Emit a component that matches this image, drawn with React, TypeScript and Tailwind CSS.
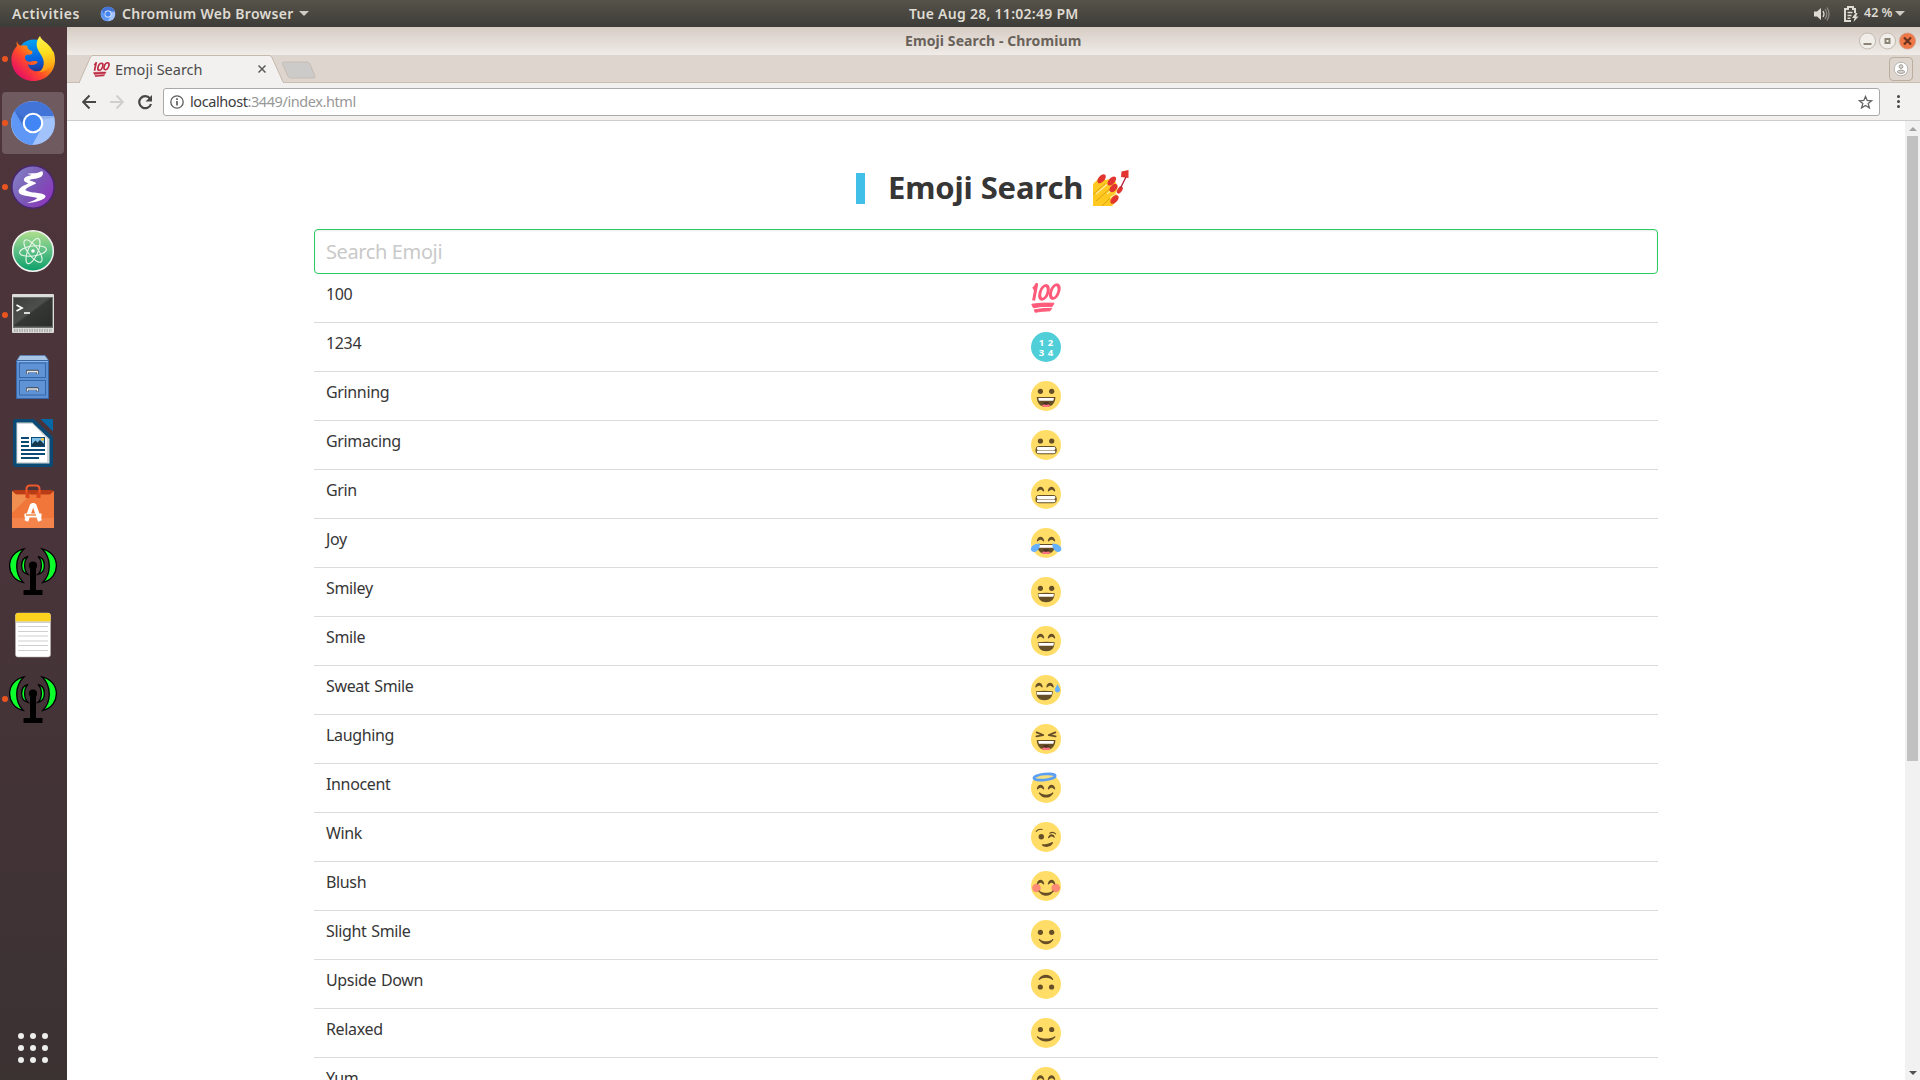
import React from "react";

const INK = "#664e27";

function Eyes({ y = 10.3 }: { y?: number }) {
  return (
    <g fill={INK}>
      <circle cx="9.4" cy={y} r="2.6" />
      <circle cx="20.7" cy={y} r="2.6" />
    </g>
  );
}

function HappyEyes({ y = 11, dx = 0 }: { y?: number; dx?: number }) {
  return (
    <g fill={INK} transform={`translate(${dx} ${y})`}>
      <path d="M5.800 .8C6.800-4.600 12.400-4.600 13.200.8 13.300 1.600 12.600 1.700 12.200 1.300 10.500-.8 8.500-.8 6.800 1.300 6.400 1.700 5.700 1.500 5.800.8z" />
      <path d="M16.800 .8C17.800-4.600 23.400-4.600 24.200.8 24.300 1.600 23.600 1.700 23.200 1.300 21.500-.8 19.500-.8 17.800 1.300 17.400 1.700 16.700 1.500 16.800.8z" />
    </g>
  );
}

function Laugh({ tongue = false, dx = 0 }: { tongue?: boolean; dx?: number }) {
  return (
    <g transform={`translate(${dx} 0)`}>
      <path d={tongue ? "M5.8 16h18.6c0 6-3.6 10-9.3 10s-9.3-4-9.3-10z" : "M6.8 16.200Q15.200 15.200 23.600 16.200c0 5.8-3.2 9-8.4 9s-8.400-3.200-8.400-9z"} fill={INK} />
      <path d="M7.400 17h15.400c0 1.600-.3 2.800-.8 2.800H8.200c-.5 0-.8-1.200-.8-2.800z" fill="#fff" />
      {tongue && (
        <>
          <path d="M12 22.200c0-1.600 6.200-1.600 6.200 0v1.800H12z" fill="#4c3526" />
          <path d="M10.600 24.900c1.600-2 3.400-1.600 4.500-1 1.100-.6 2.900-1 4.500 1-2.400 1.500-6.600 1.500-9 0z" fill="#ff717f" />
        </>
      )}
    </g>
  );
}

function Grit() {
  return (
    <g>
      <rect x="4.500" y="16" width="21.200" height="8.200" rx="3.800" fill={INK} />
      <rect x="5.800" y="17" width="18.600" height="2.900" rx="1.300" fill="#fff" />
      <rect x="5.800" y="20.400" width="18.600" height="2.800" rx="1.300" fill="#fff" />
    </g>
  );
}

function Smile({ y = 19, w = 7.2 }: { y?: number; w?: number }) {
  return (
    <path
      d={`M${15.1 - w} ${y}c-.4-.8.3-1.200 1-.8C${15.1 - w / 2} ${y + 2} ${15.1 + w / 2} ${y + 2} ${14.1 + w} ${y - 0.8}c.7-.4 1.400 0 1 .8C${15.1 + w / 2} ${y + 5.6} ${15.1 - w / 2} ${y + 5.6} ${15.1 - w} ${y}z`}
      fill={INK}
    />
  );
}

function Hundred({ width, height, color }: { width: number; height: number; color: string }) {
  return (
    <svg width={width} height={height} viewBox="0 0 30 30" preserveAspectRatio="none" className="block shrink-0" fill="none" stroke={color} strokeLinejoin="round">
      <path d="M2 5.800Q4.500 4.500 5.600 1.500L2.600 17.500" strokeWidth="3" />
      <ellipse cx="0" cy="0" rx="3.900" ry="6.900" transform="matrix(1 0 -.26 1 13 9.400)" strokeWidth="3" />
      <ellipse cx="0" cy="0" rx="3.900" ry="6.900" transform="matrix(1 0 -.26 1 23.800 8.600)" strokeWidth="3" />
      <path d="M.8 21.200Q12 19.600 23 20.200L21.200 23.400Q10 22.800 2.400 24.800z" fill={color} strokeWidth="1" />
      <path d="M3.400 26.800Q12 25.200 20.800 25.300L19 27.800Q10 28 4.200 29.300z" fill={color} strokeWidth="1" />
    </svg>
  );
}

function Emoji({ kind }: { kind: string }) {
  if (kind === "100") return <Hundred width={30} height={30} color="#ff5a79" />;
  if (kind === "1234") {
    return (
      <div className="grid h-[30px] w-[30px] grid-cols-[8px_8px] grid-rows-[9px_9px] content-center justify-center gap-x-px gap-y-px rounded-full bg-[#50cfd8] text-center text-[9.500px] leading-[9px] font-bold text-white">
        <span>1</span>
        <span>2</span>
        <span>3</span>
        <span>4</span>
      </div>
    );
  }
  return (
    <svg width="30" height="30" viewBox="0 0 30 30" className="block overflow-visible">
      <circle cx="15" cy="15" r="15" fill="#ffdd67" />
      {kind === "grinning" && <><Eyes /><Laugh tongue /></>}
      {kind === "grimacing" && <><Eyes y={11} /><Grit /></>}
      {kind === "grin" && <><HappyEyes /><Grit /></>}
      {kind === "joy" && (
        <>
          <HappyEyes y={12} />
          <Laugh tongue />
          <path d="M9 15.500C3 15.500-1.500 19 .2 22.600c1.700 3 8.600 1.500 8.800-7.100z" fill="#65b1ff" />
          <path d="M21.200 15.500c6 0 10.500 3.500 8.800 7.100-1.700 3-8.600 1.500-8.800-7.100z" fill="#65b1ff" />
        </>
      )}
      {kind === "smiley" && <><Eyes y={11.3} /><Laugh /></>}
      {kind === "smile" && <><HappyEyes /><Laugh /></>}
      {kind === "sweat" && (
        <>
          <HappyEyes y={11} dx={-1.5} />
          <Laugh dx={-1.8} />
          <path d="M26.500 9c.3 1.500 2.600 3.800 2.600 5.800 0 3.500-5.200 3.500-5.200 0 0-2 2.300-4.300 2.600-5.800z" fill="#65b1ff" />
        </>
      )}
      {kind === "laughing" && (
        <>
          <path d="M5.600 8.400L12.200 11.100 5.400 12.400M24.400 8.400L17.800 11.100 24.600 12.400" fill="none" stroke={INK} strokeWidth="1.800" strokeLinejoin="round" strokeLinecap="round" />
          <Laugh tongue />
        </>
      )}
      {kind === "innocent" && (
        <>
          <HappyEyes y={15} />
          <Smile y={20.4} />
          <ellipse cx="13.600" cy="4" rx="10.800" ry="2.900" transform="rotate(-6 13.600 4)" fill="#f5df7c" stroke="#5a9ff5" strokeWidth="2.500" />
        </>
      )}
      {kind === "wink" && (
        <>
          <circle cx="10.300" cy="14.800" r="2.700" fill={INK} />
          <path d="M17 15.600c1.200-4.600 6-4.400 6.800-.6 0 .8-.7.800-1.100.4-1.400-1.400-3-1.300-4.600.5-.5.500-1.200.4-1.100-.3z" fill={INK} />
          <path d="M5.200 9.300c1.300-1.600 4-2.200 6-1.800M18.800 11.200c2-1.200 4.300-.8 5.800.6" fill="none" stroke={INK} strokeWidth="1.100" strokeLinecap="round" />
          <path d="M11.500 22.300c3.800 0 6.700-.6 9.700-2.300 1-.3.900.6.600 1.300-1.600 4-8.200 4.700-10.800 1.900-.4-.6 0-.9.500-.9z" fill={INK} />
        </>
      )}
      {kind === "blush" && (
        <>
          <circle cx="5.500" cy="17" r="4.300" fill="#ff8a75" />
          <circle cx="24.700" cy="17" r="4.300" fill="#ff8a75" />
          <HappyEyes y={12} />
          <Smile y={20.5} w={7.5} />
        </>
      )}
      {kind === "slight" && <><Eyes y={12.3} /><Smile y={20} w={7.2} /></>}
      {kind === "upside" && <g transform="rotate(180 15 15)"><Eyes y={12} /><Smile y={20} w={7.2} /></g>}
      {kind === "relaxed" && <><Eyes y={11.5} /><Smile y={19.3} w={9.2} /></>}
      {kind === "yum" && <><HappyEyes y={11.5} /><Smile y={20} /></>}
    </svg>
  );
}

const rows: [string, string][] = [
  ["100", "100"],
  ["1234", "1234"],
  ["Grinning", "grinning"],
  ["Grimacing", "grimacing"],
  ["Grin", "grin"],
  ["Joy", "joy"],
  ["Smiley", "smiley"],
  ["Smile", "smile"],
  ["Sweat Smile", "sweat"],
  ["Laughing", "laughing"],
  ["Innocent", "innocent"],
  ["Wink", "wink"],
  ["Blush", "blush"],
  ["Slight Smile", "slight"],
  ["Upside Down", "upside"],
  ["Relaxed", "relaxed"],
  ["Yum", "yum"],
];

function Firefox() {
  return (
    <svg width="48" height="48" viewBox="0 0 48 48">
      <defs>
        <linearGradient id="ffBody" x1="0.9" y1="0.1" x2="0.15" y2="0.8">
          <stop offset="0" stopColor="#ffe226" />
          <stop offset=".35" stopColor="#ff9a0e" />
          <stop offset=".65" stopColor="#ff4a2b" />
          <stop offset="1" stopColor="#e9155f" />
        </linearGradient>
        <linearGradient id="ffGlobe" x1="0.4" y1="0" x2="0.5" y2="1">
          <stop offset="0" stopColor="#00a3f5" />
          <stop offset=".6" stopColor="#0560df" />
          <stop offset="1" stopColor="#2b2a7c" />
        </linearGradient>
        <linearGradient id="ffFlame" x1="0.4" y1="0" x2="0.5" y2="1">
          <stop offset="0" stopColor="#fff44f" />
          <stop offset=".45" stopColor="#ffdf1f" />
          <stop offset="1" stopColor="#ff9313" />
        </linearGradient>
      </defs>
      <circle cx="25" cy="22" r="17.500" fill="url(#ffGlobe)" />
      <path d="M8 6c-.6 2-.4 3.500 0 5-3.800 4-6 9-5.500 15C3.200 37.500 13 46 24.500 46 37 46 46 36.500 46 25c0-3-.6-6-1.600-8.500L39 14c-1 8 1 12-2.500 17.500-3 4.500-8.500 6-12.500 4-3-1.400-5-4-5-6.300 3 1.300 6 1.200 8.500-.6 1.200-.8 1.500-2 .2-2.400-3.500-.6-6 1.200-8.700.2-3-1-4-4.400-1.800-6.400 1.800-.6 3.800.6 6-1.200.4-1-.4-1.600.2-2.800-3.800-.7-5-2.500-5.200-5.200-3.200-1.300-5-.3-6.700-.3C9.500 10.500 8.400 8.300 8 6z" fill="url(#ffBody)" />
      <path d="M31 1c-3 3.500-4.200 8-2.600 12.500 1.600 4.300 5.600 7.500 6.300 13 .5 4.500-1.200 8-4.700 11 7-1 12.500-4.500 14.500-10.500 2-7-.8-13.500-6.500-18.500C35 5.700 32 4.500 31 1z" fill="url(#ffFlame)" />
    </svg>
  );
}

function Chromium({ size = 48 }: { size?: number }) {
  return (
    <svg width={size} height={size} viewBox="0 0 48 48" className="shrink-0">
      <circle cx="24" cy="24" r="22" fill="#a1c2fa" />
      <path d="M45 17H24L15.500 28.500 5.500 12C13-.5 38-3 45 17z" fill="#4274d8" />
      <path d="M5.500 12C-3 26 6 44 23.300 46L32 30 16 28z" fill="#5e97f6" />
      <path d="M5.500 12L15 29l1.500-9z" fill="#3567c4" opacity=".6" />
      <path d="M24 17h21l.4 1.600L31 21z" fill="#8fb2ee" />
      <circle cx="24" cy="24" r="10.300" fill="#fff" />
      <circle cx="24" cy="24" r="8.200" fill="#4285f4" />
    </svg>
  );
}

function Emacs() {
  return (
    <svg width="48" height="48" viewBox="0 0 48 48">
      <defs>
        <linearGradient id="em" x1="0" y1=".2" x2="1" y2=".9">
          <stop offset="0" stopColor="#8381c5" />
          <stop offset=".5" stopColor="#7a56b5" />
          <stop offset="1" stopColor="#9430bd" />
        </linearGradient>
      </defs>
      <circle cx="24" cy="24" r="21.200" fill="url(#em)" stroke="#4a2670" strokeWidth="1.600" />
      <path d="M18.400 10.700c3-.8 7-.3 9.500-.8 2.300-.5 4-1.800 5-1.600 1.600.6 1.500 4-1 5.600-3 1.900-9 1.800-11.500 3 2 1.500 6.500 1.800 6.800 3.600-2.800 1.300-9.500 3.700-11 6.500 4 3.500 18.500 2 20.300 6 .5 3.500-9 6.200-19.200 7.200 4-1.300 9.500-3.300 11-5.200-4.500-2-16.800-1.300-18.600-5.800-1-4.500 6-7 9.500-8.700-2-1.200-4.500-2-4.300-4.200.5-2.500 4.500-3.500 8-4.300-1.700-.4-3-.6-4.500-1.300z" fill="#fff" />
    </svg>
  );
}

function Atom() {
  return (
    <svg width="48" height="48" viewBox="0 0 48 48">
      <defs>
        <linearGradient id="at" x1=".5" y1="0" x2=".5" y2="1">
          <stop offset="0" stopColor="#b3df8d" />
          <stop offset=".5" stopColor="#5cc086" />
          <stop offset="1" stopColor="#0a9f68" />
        </linearGradient>
      </defs>
      <circle cx="24" cy="24" r="20.300" fill="url(#at)" stroke="#f3f3f3" strokeWidth="1.500" />
      <g fill="none" stroke="#e9f7ea" strokeWidth="1.100">
        <ellipse cx="24" cy="24" rx="13.500" ry="5" transform="rotate(-8 24 24)" />
        <ellipse cx="24" cy="24" rx="13.500" ry="5" transform="rotate(53 24 24)" />
        <ellipse cx="24" cy="24" rx="13.500" ry="5" transform="rotate(113 24 24)" />
      </g>
      <circle cx="24" cy="24" r="1.800" fill="#fff" />
    </svg>
  );
}

function Terminal() {
  return (
    <svg width="48" height="48" viewBox="0 0 48 48">
      <defs>
        <linearGradient id="tm" x1="0" y1="0" x2="1" y2="1">
          <stop offset="0" stopColor="#3d3f3d" />
          <stop offset=".45" stopColor="#4d4f4c" />
          <stop offset=".5" stopColor="#353735" />
          <stop offset="1" stopColor="#2b2d2b" />
        </linearGradient>
      </defs>
      <rect x="3" y="3" width="42" height="39" rx="1" fill="#dcdcda" />
      <rect x="4" y="6" width="40" height="31" fill="#6e706d" />
      <rect x="5" y="7" width="38" height="28.500" fill="url(#tm)" />
      <path d="M5 39.500h38" stroke="#b0b0ae" strokeWidth="3.500" strokeDasharray="1.500 1" />
      <path d="M7.500 14l5.500 3-5.500 3" fill="none" stroke="#fff" strokeWidth="1.700" />
      <path d="M15 22h6" stroke="#fff" strokeWidth="1.600" />
    </svg>
  );
}

function Files() {
  const drawer = (y: number) => (
    <g>
      <rect x="10.500" y={y} width="26" height="14.500" fill="#5f93d6" stroke="#3566a8" strokeWidth="1" />
      <path d={`M18.500 ${y + 11}v-3h10v3`} fill="none" stroke="#3d4650" strokeWidth="2.600" strokeLinejoin="round" />
      <path d={`M18.500 ${y + 10.8}v-2.300h10v2.300`} fill="none" stroke="#e8e8e6" strokeWidth="1.300" strokeLinejoin="round" />
    </g>
  );
  return (
    <svg width="48" height="48" viewBox="0 0 48 48">
      <path d="M11 0.500h25L40 6H7.500z" fill="#a9c6e6" stroke="#5583ba" strokeWidth=".8" />
      <rect x="7.500" y="5.500" width="32" height="38" fill="#5c8fd3" stroke="#3766a5" />
      <path d="M8 6.500h31" stroke="#8db5e6" />
      {drawer(8)}
      {drawer(25.5)}
    </svg>
  );
}

function Writer() {
  return (
    <svg width="48" height="48" viewBox="0 0 48 48">
      <path d="M6.500 0H25l19 18v27.500q0 2.500-2.500 2.500h-35Q4 48 4 45.500v-43Q4 0 6.500 0z" fill="#0b4a74" />
      <path d="M31.500 0H43q1 0 1 1v11.500z" fill="#0867a5" />
      <path d="M7.500 3.500h15.800L40.500 20v24.500h-33z" fill="#d3d7d8" />
      <path d="M8.500 5h15L38 20v23H8.500z" fill="#fff" />
      <path d="M12 19h8M12 23h8M12 27h8M12 31h24M12 35h24M12 39h18" stroke="#0b4a74" strokeWidth="2" />
      <rect x="22.500" y="18.500" width="13" height="9" fill="#7fc0e8" stroke="#0b4a74" />
      <path d="M23 27v-2l3.500-3.500 2 2 2.500-2.500 4 4v2z" fill="#16384d" />
      <circle cx="33.500" cy="20.300" r="1.500" fill="#f6c53c" />
    </svg>
  );
}

function Software() {
  return (
    <svg width="48" height="48" viewBox="0 0 48 48">
      <path d="M3 8l3-1h36l3 1-3 4H6z" fill="#b83d16" />
      <path d="M17.500 11V6q0-3.500 3.500-3.500h6q3.500 0 3.500 3.500v5" fill="none" stroke="#f0582a" strokeWidth="2" />
      <path d="M3 8l4 3.500h34L45 8v37H3z" fill="#f0763a" />
      <path d="M3 8l4 3.500h15L3 30z" fill="#f09a58" opacity=".7" />
      <path d="M3 35h42v10H3z" fill="#f5834c" />
      <path d="M18.500 10v5M29.500 10v5" stroke="#d9481c" strokeWidth="4" />
      <path d="M17.300 38L23 22h2.300L31 38M15.500 32.500h17" fill="none" stroke="#fff" strokeWidth="4" strokeLinejoin="bevel" />
      <path d="M17 32h10" stroke="#f08a45" strokeWidth="1.500" />
    </svg>
  );
}

function Antenna() {
  return (
    <svg width="48" height="48" viewBox="0 0 48 48">
      <g fill="#0cff2a" stroke="#000" strokeWidth="1.300">
        <path d="M15 1.800C-4 6-4 31 14 35.300 5.500 26.500 5.500 11 15 1.800z" />
        <path d="M33 1.800c19 4.200 19 29.200 1 33.500C42.500 26.500 42.500 11 33 1.800z" />
        <path d="M19 9.500c-8.500 2-8.500 16 0 17.800-4.500-4-4.500-13.800 0-17.800z" />
        <path d="M29 9.500c8.500 2 8.500 16 0 17.800 4.500-4 4.500-13.800 0-17.800z" />
      </g>
      <circle cx="24" cy="18.500" r="4.100" />
      <path d="M21 19h6v24h6.500v5h-19v-5H21z" />
    </svg>
  );
}

function Notes() {
  return (
    <svg width="48" height="48" viewBox="0 0 48 48">
      <rect x="6.500" y="2" width="35" height="44" rx="2.500" fill="#fff" stroke="#b9b1b2" strokeWidth=".6" />
      <path d="M6.500 10.500V4.500Q6.500 2 9 2h30q2.500 0 2.500 2.500v6z" fill="#fcd21f" />
      <path d="M7 11.200h34" stroke="#b8b8b8" />
      <path d="M9 15.500h30M9 20.500h30M9 25h30M9 30h30M9 34.500h30M9 39.500h30" stroke="#cfcfcf" />
    </svg>
  );
}

const dock: { icon: React.ReactNode; running?: boolean; active?: boolean }[] = [
  { icon: <Firefox />, running: true },
  { icon: <Chromium />, running: true, active: true },
  { icon: <Emacs />, running: true },
  { icon: <Atom /> },
  { icon: <Terminal />, running: true },
  { icon: <Files /> },
  { icon: <Writer /> },
  { icon: <Software /> },
  { icon: <Antenna /> },
  { icon: <Notes /> },
  { icon: <Antenna />, running: true },
];

function Dock() {
  return (
    <nav className="flex w-[67px] shrink-0 flex-col items-center justify-between bg-linear-to-b from-[#4f353a] via-[#48343a] to-[#3b3232] pr-px pb-[17px]">
      <div className="flex flex-col gap-[2px] pt-px">
        {dock.map((d, i) => (
          <div key={i} className={`relative flex h-[62px] w-[62px] items-center justify-center rounded-[4px] ${d.active ? "bg-[#6e5a5f]" : ""}`}>
            {d.running && <span className="absolute top-[28px] left-0 h-[6px] w-[6px] rounded-full bg-[#e95420]" />}
            {d.icon}
          </div>
        ))}
      </div>
      <div className="grid grid-cols-3 gap-[6px]">
        {Array.from({ length: 9 }, (_, i) => (
          <span key={i} className="h-[6px] w-[6px] rounded-full bg-[#eeeeec]" />
        ))}
      </div>
    </nav>
  );
}

function TopBar() {
  return (
    <header className="flex h-[27px] shrink-0 items-center bg-linear-to-b from-[#57534a] to-[#3d3c38] text-[14px] leading-none font-semibold whitespace-nowrap text-[#dfdbd2]">
      <div className="flex w-[900px] items-center pl-3">
        <span className="w-[88px] tracking-[0.55px]">Activities</span>
        <Chromium size={16} />
        <span className="ml-[6px] w-[173px] tracking-[0.3px]">Chromium Web Browser</span>
        <span className="ml-1 border-x-[5px] border-t-[5px] border-x-transparent border-t-[#d0ccc4]" />
      </div>
      <span className="w-[200px] pl-[9px] tracking-[0.27px]">Tue Aug 28, 11:02:49 PM</span>
      <div className="flex flex-1 items-center justify-end pr-[15px]">
        <svg width="16" height="14" viewBox="0 0 16 14" className="mr-[14px]">
          <path d="M0 4.500h3L7 1v12L3 9.500H0z" fill="#dfdbd2" />
          <path d="M9 4q2 3 0 6" fill="none" stroke="#dfdbd2" strokeWidth="1.300" />
          <path d="M11 2q3.500 5 0 10M13 .5q4 6.500 0 13" fill="none" stroke="#8b8880" strokeWidth="1.300" />
        </svg>
        <svg width="15" height="16" viewBox="0 0 15 16" className="mr-[5px]">
          <path d="M11 7V3H9V1H4v2H1v12h6" fill="none" stroke="#dfdbd2" strokeWidth="2" />
          <path d="M3.500 6.500h5M3.500 9.500h4M3.500 12.200h3" stroke="#dfdbd2" strokeWidth="1.400" />
          <path d="M11.500 7L8 12h2.500L9.500 16l5-5.500H12L13.500 7z" fill="#dfdbd2" />
        </svg>
        <span className="w-[28px] text-[12.500px]">42 %</span>
        <span className="ml-[3px] border-x-[5px] border-t-[5px] border-x-transparent border-t-[#d0ccc4]" />
      </div>
    </header>
  );
}

function WindowChrome() {
  return (
    <>
      <div className="flex h-[28px] shrink-0 items-center bg-linear-to-b from-[#d6ccc4] to-[#f0ece8] pr-[5px]">
        <span className="flex-1 pl-[838px] text-[14px] leading-none font-bold tracking-[0.1px] whitespace-nowrap text-[#69625a]">Emoji Search - Chromium</span>
        <svg width="57" height="18" viewBox="0 0 57 18" className="mr-[-1px]">
          <g fill="#f1eeea" stroke="#bdb3a9" strokeWidth=".9">
            <circle cx="8.500" cy="9" r="8" />
            <circle cx="28.500" cy="9" r="8" />
            <circle cx="48.500" cy="9" r="8" fill="#f07746" stroke="#d49a82" />
          </g>
          <path d="M4.500 12h8" stroke="#8b8578" strokeWidth="2" />
          <rect x="26.500" y="7" width="4" height="4" fill="none" stroke="#8b8578" strokeWidth="2" />
          <path d="M45 5.500l7 7M52 5.500l-7 7" stroke="#6c3522" strokeWidth="2.300" />
        </svg>
      </div>
      <div className="flex h-[28px] shrink-0 items-start border-b border-[#c9bdb2] bg-[#dfd5cf] pl-[12px]">
        <div className="relative h-[28px] w-[206px]">
          <svg width="206" height="28" viewBox="0 0 206 28" className="absolute inset-0">
            <path d="M0 28L11.500 2Q12.300 .5 14 .5H190Q192 .5 192.800 2L204.500 28z" fill="#f2f1f0" stroke="#c5b9aa" />
            <path d="M1 28h203" stroke="#f2f1f0" strokeWidth="2" />
          </svg>
          <div className="relative flex h-[28px] items-center pl-[14px] text-[14.500px] text-[#4c4c4c]">
            <Hundred width={17} height={15} color="#bf2d45" />
            <span className="ml-[5px] w-[143px] leading-none">Emoji Search</span>
            <svg width="8" height="8" viewBox="0 0 8 8"><path d="M.5 .5l7 7M7.500 .5l-7 7" stroke="#5a5a5a" strokeWidth="1.500" /></svg>
          </div>
        </div>
        <svg width="35" height="18" viewBox="0 0 35 18" className="mt-[6px] -ml-[4px]">
          <path d="M2.500 1H26q2 0 2.800 1.500L34 15q.5 2-1 2H10Q8 17 7.200 15.500L1.500 3Q1 1 2.500 1z" fill="#cdcbc9" stroke="#c5bcb2" />
        </svg>
        <div className="flex-1" />
        <div className="mt-[2px] mr-[7px] flex h-[24px] w-[24px] items-center justify-center rounded-[4px] border border-[#bcae9c]">
          <svg width="16" height="16" viewBox="0 0 16 16">
            <circle cx="8" cy="8" r="6.800" fill="#fff" stroke="#aaa6a2" strokeWidth=".8" />
            <circle cx="8" cy="5.600" r="1.900" fill="#d8d4d0" stroke="#9f9b97" />
            <ellipse cx="8" cy="10.800" rx="3.700" ry="1.600" fill="#d8d4d0" stroke="#9f9b97" />
          </svg>
        </div>
      </div>
      <div className="flex h-[38px] shrink-0 items-center border-b border-[#cfcdcb] bg-[#f2f1f0] pl-[15px]">
        <svg width="72" height="16" viewBox="0 0 72 16" fill="none" strokeWidth="2" className="shrink-0">
          <path d="M14 8H1.500M7.500 1.500L1.200 8l6.300 6.500" stroke="#474747" />
          <path d="M28 8h12.500M34.500 1.500L40.800 8l-6.300 6.500" stroke="#cfcfce" />
          <path d="M68 4.500A6 6 0 1 0 69 10" stroke="#474747" strokeWidth="2.200" />
          <path d="M70 1v6.500h-6.500z" fill="#474747" />
        </svg>
        <div className="ml-[9px] flex h-[28px] w-[1717px] items-center rounded-[3px] border border-[#a9a9a9] bg-white pl-[6px] text-[14.500px]">
          <svg width="14" height="14" viewBox="0 0 14 14" fill="none" stroke="#5c5c5c" className="shrink-0">
            <circle cx="7" cy="7" r="6.200" strokeWidth="1.300" />
            <path d="M7 6v4.500M7 3.200v1.700" strokeWidth="1.700" />
          </svg>
          <span className="ml-[6px] flex-1 leading-none tracking-[-0.42px] whitespace-nowrap text-[#989898]"><span className="text-[#3d3d3d]">localhost</span>:3449/index.html</span>
          <svg width="15" height="14" viewBox="0 0 15 14" className="mr-[6px]">
            <path d="M7.500 1.500l1.700 4 4.500.3-3.500 2.800 1.200 4.300-3.900-2.400-3.900 2.400 1.200-4.300L1.300 5.800l4.500-.3z" fill="none" stroke="#626262" strokeWidth="1.300" />
          </svg>
        </div>
        <div className="ml-[17px] flex flex-col gap-[2px]">
          <span className="h-[3px] w-[3px] rounded-full bg-[#474747]" />
          <span className="h-[3px] w-[3px] rounded-full bg-[#474747]" />
          <span className="h-[3px] w-[3px] rounded-full bg-[#474747]" />
        </div>
      </div>
    </>
  );
}

function NailPolish() {
  return (
    <svg width="36" height="36" viewBox="0 0 36 36" className="-ml-px overflow-hidden">
      <path d="M0 14L6 8l7 2 1.500-.5L21 9l3 6 .5 4-2 4 3 4-3 5-3.500 4H0z" fill="#ffc922" />
      <path d="M0 24.500L12 13.500M3 31L20 16M9 36l12-12" stroke="#dba512" strokeWidth="1" fill="none" />
      <path d="M14 14.500L3 24M22 17L14 24M23.500 23L17 28" stroke="#ffe9a0" strokeWidth="1.100" />
      <g fill="#e2352f">
        <ellipse cx="8.600" cy="8.800" rx="5.300" ry="3.100" transform="rotate(-48 8.600 8.800)" />
        <ellipse cx="18.800" cy="11" rx="5.500" ry="3.100" transform="rotate(-48 18.800 11)" />
        <ellipse cx="20.500" cy="18" rx="4.800" ry="3" transform="rotate(-48 20.500 18)" />
        <ellipse cx="21.500" cy="29.500" rx="5.200" ry="3" transform="rotate(-48 21.500 29.500)" />
        <ellipse cx="26.800" cy="20" rx="4" ry="2.300" transform="rotate(-55 26.800 20)" />
        <path d="M28.500 1.500L35.500 0v8L28 7z" />
      </g>
      <path d="M33 7L27.500 18" stroke="#b7233c" strokeWidth="1.400" />
    </svg>
  );
}

function Page() {
  return (
    <div className="flex min-h-0 flex-1 bg-white">
      <main className="flex min-w-0 flex-1 flex-col items-center overflow-hidden pt-[49px] pr-[1px] pl-[136px] text-[#363636]">
        <div className="ml-[111px] w-[1344px] shrink-0 self-start">
          <h1 className="flex h-[36px] items-center pl-[542px]">
            <span className="h-[31px] w-[9px] bg-[#42bfe8]" />
            <span className="mb-[2px] ml-[23px] w-[206px] text-[31px] leading-none font-bold tracking-[-0.15px] whitespace-nowrap">Emoji Search</span>
            <NailPolish />
          </h1>
          <div className="mt-[23px] flex h-[45px] items-center rounded-[4px] border border-[#2bcb62] px-[11px] text-[20px] text-[#c9c9c9] shadow-[inset_0_1px_2px_rgba(10,10,10,0.08)]">
            <span className="leading-none tracking-[-0.38px]">Search Emoji</span>
          </div>
          {rows.map(([name, kind]) => (
            <div key={name} className="flex h-[49px] border-b border-[#dbdbdb]">
              <div className="w-[705px] pt-[8px] pl-[12px] text-[16px] leading-6 tracking-[-0.35px] [word-spacing:1px]">{name}</div>
              <div className="pt-[9px] pl-[12px]">
                <Emoji kind={kind} />
              </div>
            </div>
          ))}
        </div>
      </main>
      <aside className="flex w-[15px] shrink-0 flex-col items-center justify-between bg-[#f1f1f1]">
        <div className="flex flex-col items-center">
          <span className="mt-[6px] mb-[5px] border-x-[4px] border-b-[4px] border-x-transparent border-b-[#a3a3a3]" />
          <span className="h-[625px] w-[11px] bg-[#c1c1c1]" />
        </div>
        <span className="mb-[5px] border-x-[4px] border-t-[4px] border-x-transparent border-t-[#505050]" />
      </aside>
    </div>
  );
}

export default function App() {
  return (
    <div className="flex h-[1080px] w-[1920px] flex-col overflow-hidden font-['Noto_Sans',sans-serif]">
      <TopBar />
      <div className="flex min-h-0 flex-1">
        <Dock />
        <div className="flex min-w-0 flex-1 flex-col">
          <WindowChrome />
          <Page />
        </div>
      </div>
    </div>
  );
}
